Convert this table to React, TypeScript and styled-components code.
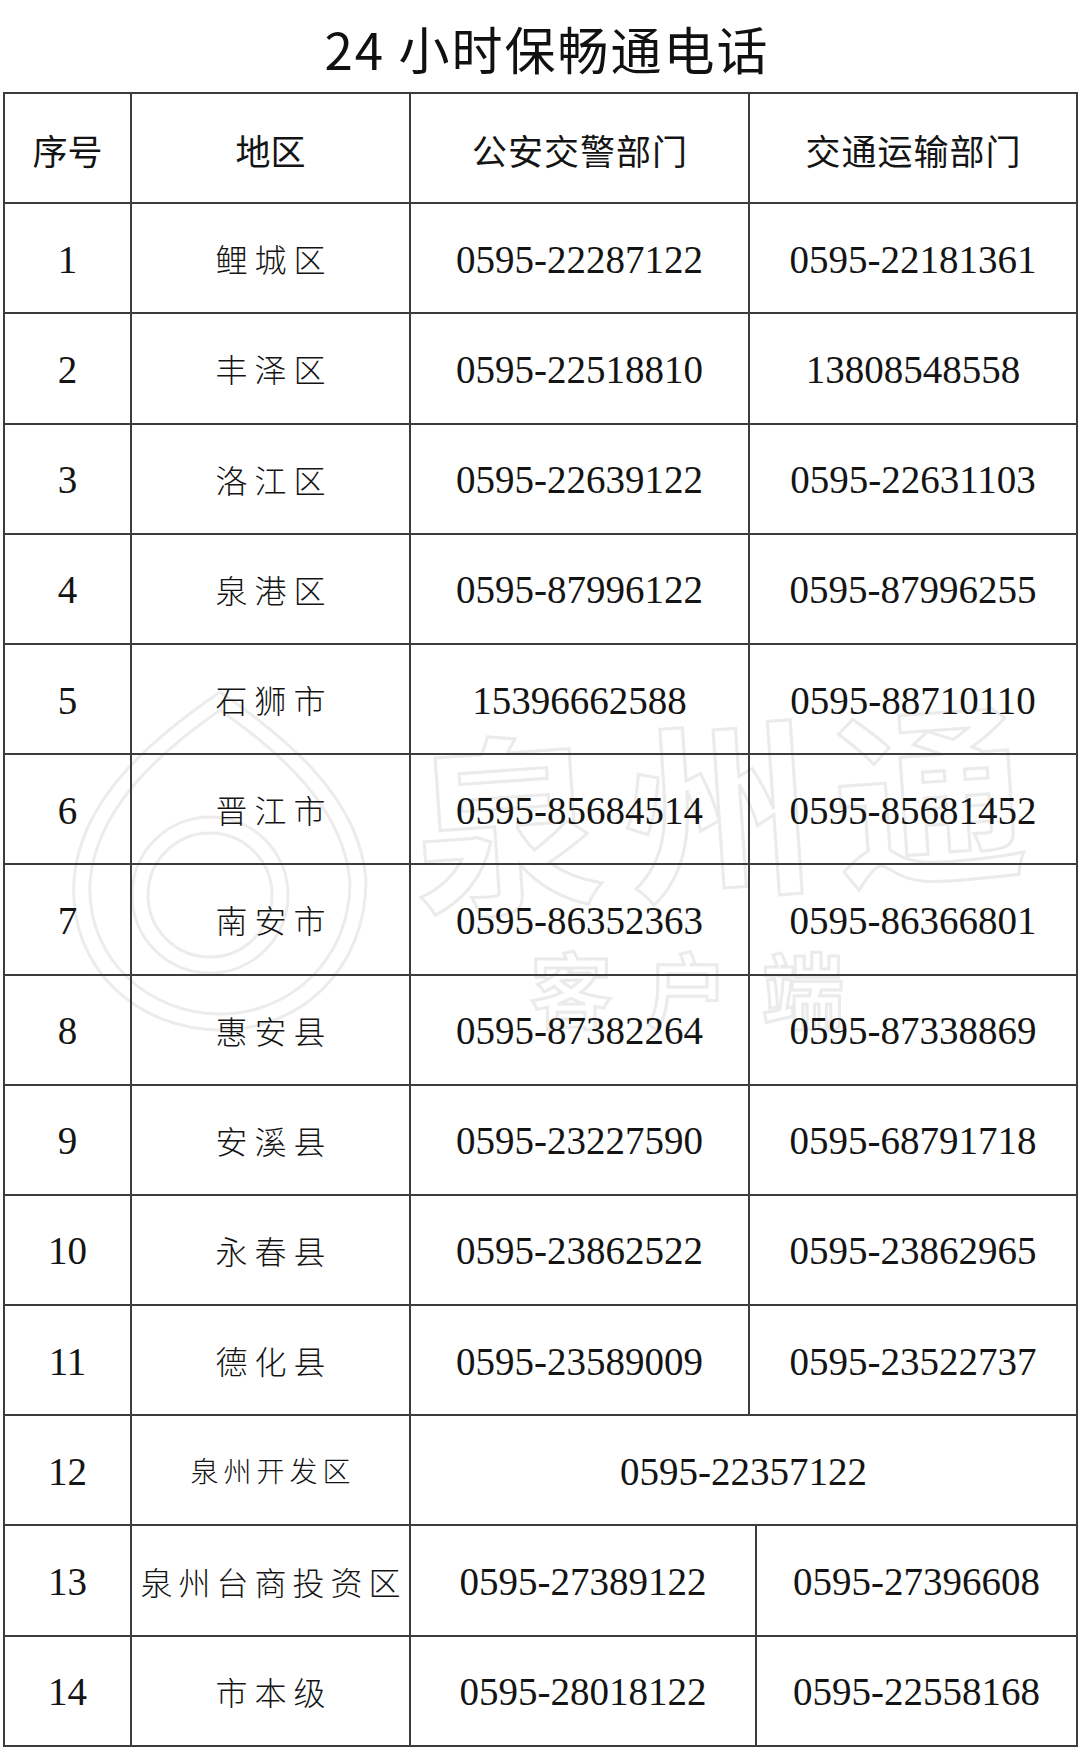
import React from "react"
import styled, { createGlobalStyle } from "styled-components"

type Row = {
    no: string
    area: string
    police: string
    transport?: string
    areaSize?: number
    areaGap?: number
    cols?: string
}

const COLS = "127px 279px 339px 1fr"
const COLS_WIDE = "127px 279px 346px 1fr"
const COLS_MERGED = "127px 279px 1fr"

const rows: Row[] = [
    { no: "1", area: "鲤城区", police: "0595-22287122", transport: "0595-22181361" },
    { no: "2", area: "丰泽区", police: "0595-22518810", transport: "13808548558" },
    { no: "3", area: "洛江区", police: "0595-22639122", transport: "0595-22631103" },
    { no: "4", area: "泉港区", police: "0595-87996122", transport: "0595-87996255" },
    { no: "5", area: "石狮市", police: "15396662588", transport: "0595-88710110" },
    { no: "6", area: "晋江市", police: "0595-85684514", transport: "0595-85681452" },
    { no: "7", area: "南安市", police: "0595-86352363", transport: "0595-86366801" },
    { no: "8", area: "惠安县", police: "0595-87382264", transport: "0595-87338869" },
    { no: "9", area: "安溪县", police: "0595-23227590", transport: "0595-68791718" },
    { no: "10", area: "永春县", police: "0595-23862522", transport: "0595-23862965" },
    { no: "11", area: "德化县", police: "0595-23589009", transport: "0595-23522737" },
    { no: "12", area: "泉州开发区", police: "0595-22357122", areaSize: 28, areaGap: 5, cols: COLS_MERGED },
    { no: "13", area: "泉州台商投资区", police: "0595-27389122", transport: "0595-27396608", areaGap: 6, cols: COLS_WIDE },
    { no: "14", area: "市本级", police: "0595-28018122", transport: "0595-22558168", cols: COLS_WIDE },
]

// faint app watermark that sits behind the table
const WatermarkLogo = () => (
    <svg width="1020" height="390" viewBox="0 0 1020 390">
        <g fill="none" stroke="#ececec" strokeWidth="3">
            <path d="M160 32 C 90 80 20 140 14 220 C 8 310 80 370 160 370 C 240 370 306 310 306 220 C 300 140 230 80 160 32 Z" />
            <path d="M160 50 C 100 92 36 148 30 222 C 26 300 90 354 160 354 C 230 354 290 300 290 222 C 284 148 220 92 160 50 Z" />
            <circle cx="150" cy="235" r="78" />
            <circle cx="150" cy="235" r="62" />
        </g>
        <g
            fill="none"
            stroke="#ebebeb"
            strokeWidth="3"
            fontFamily="'Noto Sans CJK SC', sans-serif"
            fontWeight="700"
        >
            <text x="350" y="225" fontSize="190" letterSpacing="22" transform="rotate(-4 640 140)">
                泉州通
            </text>
            <text x="470" y="362" fontSize="82" letterSpacing="34">
                客户端
            </text>
        </g>
    </svg>
)

export default function App() {
    return (
        <Page>
            <GlobalStyle />
            <Watermark aria-hidden>
                <WatermarkLogo />
            </Watermark>

            <Title>24 小时保畅通电话</Title>

            <Table>
                <TableRow $cols={COLS}>
                    <HeadCell>序号</HeadCell>
                    <HeadCell>地区</HeadCell>
                    <HeadCell $gap={1}>公安交警部门</HeadCell>
                    <HeadCell $gap={1}>交通运输部门</HeadCell>
                </TableRow>
                {rows.map((r) => (
                    <TableRow key={r.no} $cols={r.cols ?? COLS}>
                        <NumCell>{r.no}</NumCell>
                        <AreaCell $size={r.areaSize ?? 32} $gap={r.areaGap ?? 7}>
                            {r.area}
                        </AreaCell>
                        <NumCell>{r.police}</NumCell>
                        {r.transport && <NumCell>{r.transport}</NumCell>}
                    </TableRow>
                ))}
            </Table>
        </Page>
    )
}

const GlobalStyle = createGlobalStyle`
    html, body {
        margin: 0;
        padding: 0;
        background: #ffffff;
    }
    body {
        font-family: "Noto Sans CJK SC", "Noto Sans", sans-serif;
        color: #111;
    }
`

const Page = styled.div`
    position: relative;
    width: 1080px;
    height: 1759px;
    background: #fff;
    overflow: hidden;
`

const Title = styled.h1`
    margin: 0;
    height: 92px;
    display: flex;
    align-items: center;
    justify-content: center;
    padding: 4px 0 0 14px;
    box-sizing: border-box;
    font-family: "Noto Sans CJK SC", "Noto Sans", sans-serif;
    font-size: 51px;
    font-weight: 400;
    letter-spacing: 2px;
    color: #111;
`

const Table = styled.div`
    position: relative;
    z-index: 1;
    margin-left: 3px;
    width: 1073px;
    border-top: 2px solid #3c3c3c;
    border-left: 2px solid #3c3c3c;
    box-sizing: content-box;
`

const TableRow = styled.div<{ $cols: string }>`
    display: grid;
    grid-template-columns: ${({ $cols }) => $cols};
    height: 110.2px;
`

const Cell = styled.div`
    display: flex;
    align-items: center;
    justify-content: center;
    border-right: 2px solid #3c3c3c;
    border-bottom: 2px solid #3c3c3c;
    box-sizing: border-box;
    white-space: nowrap;
    color: #141414;
`

const HeadCell = styled(Cell)<{ $gap?: number }>`
    font-family: "Noto Sans CJK SC", sans-serif;
    font-size: 35px;
    font-weight: 400;
    letter-spacing: ${({ $gap }) => $gap ?? 0}px;
    padding-left: ${({ $gap }) => $gap ?? 0}px;
    padding-top: 2px;
`

const NumCell = styled(Cell)`
    font-family: "Liberation Serif", "Times New Roman", serif;
    font-size: 39px;
    font-weight: 400;
    padding-top: 2px;
`

const AreaCell = styled(Cell)<{ $size: number; $gap: number }>`
    font-family: "Noto Sans CJK SC", sans-serif;
    font-size: ${({ $size }) => $size}px;
    font-weight: 300;
    letter-spacing: ${({ $gap }) => $gap}px;
    padding-left: ${({ $gap }) => $gap}px;
`

const Watermark = styled.div`
    position: absolute;
    left: 60px;
    top: 660px;
    z-index: 0;
    pointer-events: none;
`
